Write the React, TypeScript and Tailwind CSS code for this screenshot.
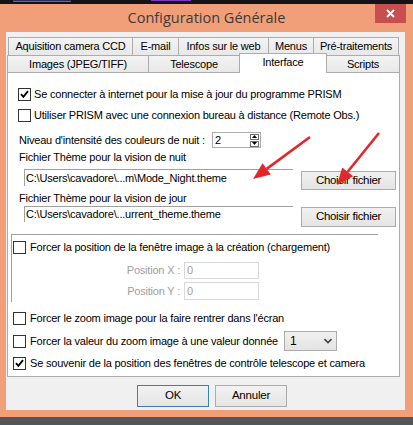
import React from "react"

const tabsTop = [
  { label: "Aquisition camera CCD", w: "w-[124px]" },
  { label: "E-mail", w: "w-[46px]" },
  { label: "Infos sur le web", w: "w-[90px]" },
  { label: "Menus", w: "w-[45px]" },
  { label: "Pré-traitements", w: "w-[86px]" },
]

function Check({ checked }: { checked?: boolean }) {
  return (
    <span className="w-[13px] h-[13px] border border-[#333] bg-white flex items-center justify-center shrink-0">
      {checked && (
        <svg width="9" height="9" viewBox="0 0 9 9">
          <path d="M1 4.2 L3.4 6.8 L8 1.2" stroke="#000" strokeWidth="1.9" fill="none" />
        </svg>
      )}
    </span>
  )
}

function CheckRow({ label, checked, gap = "gap-[3px]" }: { label: string; checked?: boolean; gap?: string }) {
  return (
    <div className={`flex items-center ${gap} h-[13px] leading-[13px]`}>
      <Check checked={checked} />
      <span className="whitespace-nowrap">{label}</span>
    </div>
  )
}

function FileButton() {
  return (
    <div className="w-[95px] h-full border border-[#acacac] bg-gradient-to-b from-[#f0f0f0] to-[#e5e5e5] flex items-center justify-center text-[11.5px] tracking-[-0.3px]">
      Choisir fichier
    </div>
  )
}

function Arrow({ x1, y1, x2, y2 }: { x1: number; y1: number; x2: number; y2: number }) {
  const dx = x2 - x1
  const dy = y2 - y1
  const len = Math.hypot(dx, dy)
  const ux = dx / len
  const uy = dy / len
  const bx = x2 - ux * 17
  const by = y2 - uy * 17
  const px = -uy * 7
  const py = ux * 7
  return (
    <g>
      <line x1={x1} y1={y1} x2={bx} y2={by} stroke="#e3262b" strokeWidth="2.6" />
      <polygon points={`${x2},${y2} ${bx + px},${by + py} ${bx - px},${by - py}`} fill="#e3262b" />
    </g>
  )
}

export default function App() {
  return (
    <div className="relative w-[413px] h-[425px] bg-[#f19f79] flex flex-col font-['Liberation_Sans',Arial,sans-serif] text-[11px] tracking-[-0.2px] text-black overflow-hidden">
      <div className="h-[4px] bg-[#141418] flex">
        <div className="ml-[13px] w-[58px] h-[2px] border-b border-[#6b5bd6] bg-[#2a2f55]" />
        <div className="ml-[80px] w-[40px] h-[1px] bg-[#7a3cc0]" />
      </div>

      {/* title bar */}
      <div className="h-[28px] grid grid-cols-[1fr_auto_1fr]">
        <div />
        <div className="pt-[4px] text-[14.5px] tracking-normal leading-[20px] text-[#3b3b3b] font-['Open_Sans',sans-serif]">
          Configuration Générale
        </div>
        <div className="flex justify-end pr-[7px]">
          <div className="w-[31px] h-[19px] bg-[#c7504f] flex items-center justify-center">
            <svg width="9" height="9" viewBox="0 0 9 9">
              <path d="M1 1 L8 8 M8 1 L1 8" stroke="#fff" strokeWidth="1.8" />
            </svg>
          </div>
        </div>
      </div>

      {/* client area */}
      <div className="ml-[6px] w-[399px] h-[378px] bg-[#f0f0f0] flex flex-col pt-[5px]">
        <div className="flex pl-[2px] h-[18px] leading-[17px]">
          {tabsTop.map((t, i) => (
            <div
              key={t.label}
              className={`${t.w} border-t border-l border-[#acacac] ${i === tabsTop.length - 1 ? "border-r" : ""} bg-gradient-to-b from-[#f3f3f3] to-[#e8e8e8] text-center`}
            >
              {t.label}
            </div>
          ))}
        </div>
        <div className="flex items-end pl-[1px] h-[17px] leading-[16px]">
          <div className="w-[141px] h-[17px] border-t border-l border-[#acacac] bg-gradient-to-b from-[#f3f3f3] to-[#e8e8e8] text-center">
            Images (JPEG/TIFF)
          </div>
          <div className="w-[91px] h-[17px] border-t border-l border-[#acacac] bg-gradient-to-b from-[#f3f3f3] to-[#e8e8e8] text-center">
            Telescope
          </div>
          <div className="relative z-10 w-[88px] h-[20px] mb-[-1px] border-t border-l border-r border-[#acacac] bg-white text-center leading-[17px]">
            Interface
          </div>
          <div className="w-[73px] h-[17px] border-t border-r border-[#acacac] bg-gradient-to-b from-[#f3f3f3] to-[#e8e8e8] text-center">
            Scripts
          </div>
        </div>

        {/* tab page */}
        <div className="ml-[1px] w-[393px] h-[305px] border border-[#acacac] bg-white flex flex-col">
          <div className="ml-[10px] mt-[15px]">
            <CheckRow checked label="Se connecter à internet pour la mise à jour du programme PRISM" />
          </div>
          <div className="ml-[10px] mt-[8px]">
            <CheckRow label="Utiliser PRISM avec une connexion bureau à distance (Remote Obs.)" />
          </div>

          <div className="ml-[11px] mt-[10px] flex items-center h-[16px]">
            <span className="w-[193px] whitespace-nowrap">Niveau d'intensité des couleurs de nuit :</span>
            <div className="w-[49px] h-[16px] border border-[#abadb3] flex items-center justify-between pl-[2px] pr-[1px]">
              <span className="leading-[14px]">2</span>
              <div className="flex flex-col gap-[1px]">
                <div className="w-[9px] h-[6px] border border-[#707070] flex items-center justify-center">
                  <svg width="5" height="3" viewBox="0 0 5 3"><path d="M0 3 L2.5 0 L5 3 Z" fill="#000" /></svg>
                </div>
                <div className="w-[9px] h-[6px] border border-[#707070] flex items-center justify-center">
                  <svg width="5" height="3" viewBox="0 0 5 3"><path d="M0 0 L5 0 L2.5 3 Z" fill="#000" /></svg>
                </div>
              </div>
            </div>
          </div>

          <div className="ml-[11px] mt-[3px] h-[13px] leading-[13px]">Fichier Thème pour la vision de nuit</div>
          <div className="ml-[16px] mt-[5px] flex h-[21px]">
            <div className="w-[269px] h-[17px] border-t border-l border-[#a0a0a0] pl-[1px] leading-[16px] whitespace-nowrap">
              C:\Users\cavadore\...m\Mode_Night.theme
            </div>
            <div className="ml-[8px] mt-[2px] h-[19px]">
              <FileButton />
            </div>
          </div>

          <div className="ml-[11px] mt-[2px] h-[13px] leading-[13px]">Fichier Thème pour la vision de jour</div>
          <div className="ml-[16px] mt-[1px] flex h-[21px]">
            <div className="w-[269px] h-[16px] border-t border-l border-[#a0a0a0] pl-[1px] leading-[15px] whitespace-nowrap">
              C:\Users\cavadore\...urrent_theme.theme
            </div>
            <div className="ml-[8px] mt-[1px] h-[20px]">
              <FileButton />
            </div>
          </div>

          {/* group */}
          <div className="ml-[3px] mt-[7px] w-[367px] h-[68px] border-t border-l border-[#a0a0a0] flex flex-col">
            <div className="ml-[1px] mt-[6px]">
              <CheckRow gap="gap-[4px]" label="Forcer la position de la fenêtre image à la création (chargement)" />
            </div>
            <div className="mt-[8px] flex items-center text-[#a0a0a0]">
              <span className="w-[168px] text-right whitespace-nowrap">Position X :</span>
              <div className="ml-[4px] w-[75px] h-[17px] border border-[#d9d9d9] pl-[2px] leading-[15px]">0</div>
            </div>
            <div className="mt-[3px] flex items-center text-[#a0a0a0]">
              <span className="w-[168px] text-right whitespace-nowrap">Position Y :</span>
              <div className="ml-[4px] w-[75px] h-[18px] border border-[#d9d9d9] pl-[2px] leading-[16px]">0</div>
            </div>
          </div>

          <div className="ml-[5px] mt-[10px]">
            <CheckRow gap="gap-[4px]" label="Forcer le zoom image pour la faire rentrer dans l'écran" />
          </div>
          <div className="ml-[5px] mt-[6px] flex items-center h-[20px]">
            <div className="w-[271px]">
              <CheckRow gap="gap-[4px]" label="Forcer la valeur du zoom image à une valeur donnée" />
            </div>
            <div className="w-[53px] h-[20px] border border-[#acacac] bg-gradient-to-b from-[#f0f0f0] to-[#e3e3e3] flex items-center justify-between pl-[5px] pr-[4px]">
              <span className="text-[12px]">1</span>
              <svg width="8" height="6" viewBox="0 0 8 6"><path d="M0.5 1 L4 4.5 L7.5 1" stroke="#444" strokeWidth="1.6" fill="none" /></svg>
            </div>
          </div>
          <div className="ml-[5px] mt-[6px]">
            <CheckRow checked gap="gap-[4px]" label="Se souvenir de la position des fenêtres de contrôle telescope et camera" />
          </div>
        </div>

        {/* dialog buttons */}
        <div className="flex gap-[6px] pl-[131px] mt-[8px] text-[11.5px]">
          <div className="w-[72px] h-[22px] border border-[#3c7fb1] bg-gradient-to-b from-[#f2f2f2] to-[#e5e5e5] flex items-center justify-center">OK</div>
          <div className="w-[72px] h-[22px] border border-[#acacac] bg-gradient-to-b from-[#f2f2f2] to-[#e5e5e5] flex items-center justify-center">Annuler</div>
        </div>
      </div>

      <div className="h-[7px]" />
      <div className="flex-1 bg-[#55565a]" />

      <svg className="absolute inset-0 pointer-events-none" width="413" height="425">
        <Arrow x1={310} y1={137} x2={253} y2={179} />
        <Arrow x1={379} y1={133} x2={337} y2={185} />
      </svg>
    </div>
  )
}
